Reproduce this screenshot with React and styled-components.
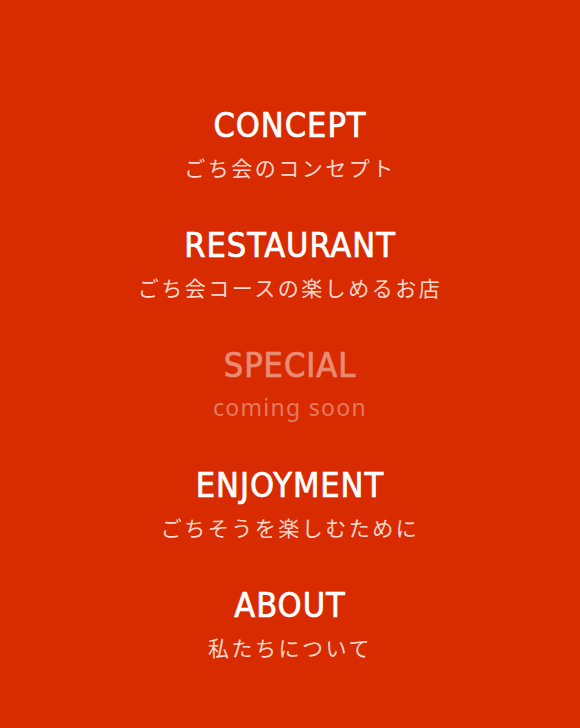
import styled, { createGlobalStyle } from "styled-components";

const GlobalStyle = createGlobalStyle`
  html, body {
    margin: 0;
    padding: 0;
    background: #d82c00;
  }
`;

const Page = styled.nav`
  min-height: 728px;
  box-sizing: border-box;
  padding-top: 103px;
  display: flex;
  flex-direction: column;
  align-items: center;
  gap: 41px;
  background: #d82c00;
`;

const Item = styled.a`
  display: flex;
  flex-direction: column;
  align-items: center;
  gap: 5px;
  text-decoration: none;
  opacity: ${({ $disabled }) => ($disabled ? 0.45 : 1)};
`;

const Title = styled.span`
  font-family: "DejaVu Sans Condensed", "DejaVu Sans", sans-serif;
  font-weight: 400;
  font-size: 34px;
  line-height: 44px;
  letter-spacing: 1px;
  color: #fff;
  -webkit-text-stroke: 0.7px #fff;
`;

const Sub = styled.span`
  font-family: ${({ $latin }) =>
    $latin
      ? '"Noto Sans", "Liberation Sans", sans-serif'
      : '"Noto Sans CJK JP", "Noto Sans", sans-serif'};
  font-size: ${({ $latin }) => ($latin ? "23px" : "21px")};
  letter-spacing: ${({ $latin }) => ($latin ? "1.3px" : "2.5px")};
  line-height: 30px;
  color: rgba(255, 255, 255, 0.82);
`;

const items = [
  { title: "CONCEPT", sub: "ごち会のコンセプト" },
  { title: "RESTAURANT", sub: "ごち会コースの楽しめるお店" },
  { title: "SPECIAL", sub: "coming soon", latin: true, disabled: true },
  { title: "ENJOYMENT", sub: "ごちそうを楽しむために" },
  { title: "ABOUT", sub: "私たちについて" },
];

export default function App() {
  return (
    <>
      <GlobalStyle />
      <Page>
        {items.map((it) => (
          <Item key={it.title} $disabled={it.disabled}>
            <Title>{it.title}</Title>
            <Sub $latin={it.latin}>{it.sub}</Sub>
          </Item>
        ))}
      </Page>
    </>
  );
}
